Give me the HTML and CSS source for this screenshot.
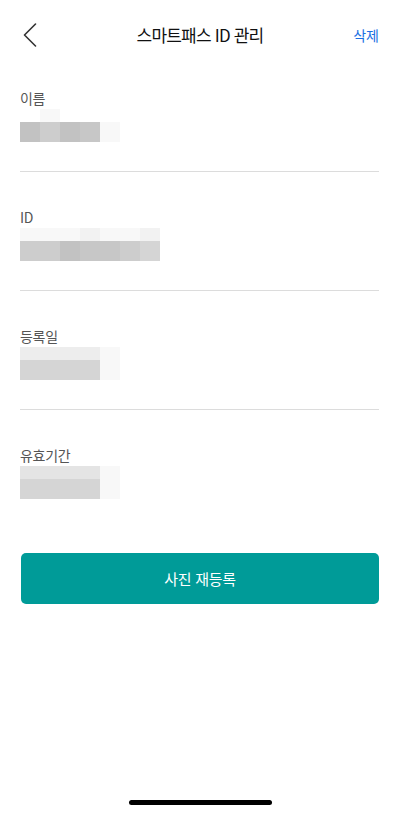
FILE: index.html
```html
<!DOCTYPE html>
<html lang="ko">
<head>
    <meta charset="UTF-8">
    <meta name="viewport" content="width=device-width, initial-scale=1.0">
    <title>스마트패스 ID 관리</title>
    <link rel="stylesheet" href="styles.css">
</head>
<body>
    <div class="screen">
        <header class="topbar">
            <button class="back" aria-label="뒤로">
                <svg width="14" height="24" viewBox="0 0 14 24">
                    <path d="M12.5 1 L1.5 12 L12.5 23" fill="none" stroke="#333" stroke-width="1.6" stroke-linejoin="round" stroke-linecap="round"/>
                </svg>
            </button>
            <h1 class="title">스마트패스 ID 관리</h1>
            <button class="delete">삭제</button>
        </header>

        <div class="fields">
            <div class="field first">
                <div class="label">이름</div>
                <div class="mosaic cols5">
                    <i class="s0"></i><i class="s1"></i><i class="s0"></i><i class="s0"></i><i class="s0"></i>
                    <i class="s8"></i><i class="s6"></i><i class="s8"></i><i class="s7"></i><i class="s1"></i>
                </div>
            </div>
            <div class="field">
                <div class="label">ID</div>
                <div class="mosaic cols7">
                    <i class="s1"></i><i class="s1"></i><i class="s1"></i><i class="s2"></i><i class="s1"></i><i class="s1"></i><i class="s2"></i>
                    <i class="s6"></i><i class="s6"></i><i class="s8"></i><i class="s7"></i><i class="s7"></i><i class="s6"></i><i class="s5"></i>
                </div>
            </div>
            <div class="field">
                <div class="label">등록일</div>
                <div class="mosaic cols5">
                    <i class="s3"></i><i class="s3"></i><i class="s3"></i><i class="s3"></i><i class="s1"></i>
                    <i class="s5"></i><i class="s5"></i><i class="s5"></i><i class="s5"></i><i class="s1"></i>
                </div>
            </div>
            <div class="field last">
                <div class="label">유효기간</div>
                <div class="mosaic cols5">
                    <i class="s4"></i><i class="s4"></i><i class="s4"></i><i class="s4"></i><i class="s1"></i>
                    <i class="s5"></i><i class="s5"></i><i class="s5"></i><i class="s5"></i><i class="s1"></i>
                </div>
            </div>
        </div>

        <button class="primary">사진 재등록</button>

        <div class="home-indicator"></div>
    </div>
</body>
</html>
```

FILE: styles.css
```css
* {
    box-sizing: border-box;
}
body {
    margin: 0;
    background-color: #fff;
    font-family: "Noto Sans CJK KR", "Noto Sans", sans-serif;
    color: #222;
}
.screen {
    width: 400px;
    height: 816px;
    display: flex;
    flex-direction: column;
}
.topbar {
    height: 70px;
    display: flex;
    align-items: center;
    justify-content: space-between;
    padding: 0 21px 0 23px;
    position: relative;
}
.back {
    border: 0;
    background: none;
    padding: 0;
    width: 14px;
    height: 24px;
    display: flex;
}
.title {
    position: absolute;
    left: 0;
    right: 0;
    top: 0;
    height: 70px;
    margin: 0;
    line-height: 70px;
    text-align: center;
    font-size: 17px;
    font-weight: 400;
    letter-spacing: -0.8px;
    color: #111;
    pointer-events: none;
}
.delete {
    border: 0;
    background: none;
    padding: 0;
    font-family: inherit;
    font-size: 14px;
    font-weight: 400;
    color: #1b6fe3;
    position: relative;
    z-index: 1;
}
.fields {
    padding: 0 21px 0 20px;
}
.field {
    padding: 34px 0 29px;
    border-bottom: 1px solid #dcdcdc;
}
.field.first {
    padding-top: 17px;
}
.field.last {
    border-bottom: 0;
    padding-bottom: 0;
}
.label {
    font-size: 14px;
    line-height: 22px;
    color: #555;
    letter-spacing: -0.3px;
}
.mosaic {
    display: grid;
    grid-template-rows: 13px 20px;
}
.mosaic.cols5 {
    grid-template-columns: repeat(5, 20px);
}
.mosaic.cols7 {
    grid-template-columns: repeat(7, 20px);
}
.mosaic i {
    display: block;
}
.s0 { background-color: #fff; }
.s1 { background-color: #f8f8f8; }
.s2 { background-color: #f2f2f2; }
.s3 { background-color: #ededed; }
.s4 { background-color: #e4e4e4; }
.s5 { background-color: #d5d5d5; }
.s6 { background-color: #cdcdcd; }
.s7 { background-color: #c7c7c7; }
.s8 { background-color: #c2c2c2; }
.primary {
    margin: 54px 21px 0;
    height: 51px;
    border: 0;
    border-radius: 5px;
    background-color: #009b98;
    color: #fff;
    font-family: inherit;
    font-size: 15px;
    letter-spacing: -0.3px;
}
.home-indicator {
    margin: auto auto 11px;
    width: 143px;
    height: 5px;
    border-radius: 3px;
    background-color: #000;
}
```
